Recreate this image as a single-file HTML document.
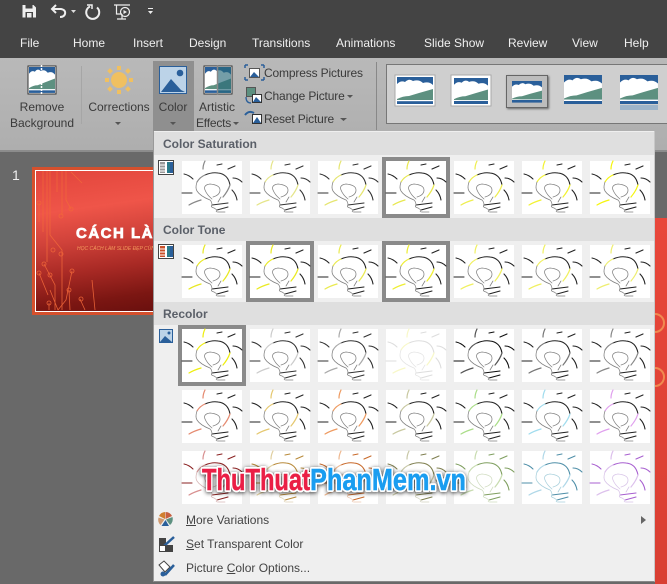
<!DOCTYPE html>
<html><head><meta charset="utf-8">
<style>
html,body{margin:0;padding:0}
body{width:667px;height:584px;position:relative;overflow:hidden;background:#696969;font-family:"Liberation Sans",sans-serif}
.a{position:absolute;white-space:nowrap}
.tab{position:absolute;top:36px;color:#f0f0f0;font-size:12px;line-height:14px}
.rb{position:absolute;color:#3a3a3a;font-size:12px;line-height:16px;text-align:center;white-space:nowrap}
.hd{position:absolute;left:154px;width:500px;height:23px;background:#dfdfdf;color:#5a5f68;font-size:12px;font-weight:bold;line-height:24px;text-indent:9px}
.mi{position:absolute;left:186px;color:#444;font-size:12px;line-height:14px;white-space:nowrap}
.sel{position:absolute;width:60px;height:53px;border:4px solid #8a8a8a}
svg{position:absolute;left:0;top:0}
.l{fill:none;stroke-linecap:round}
</style></head>
<body>
<div class="a" style="left:0;top:0;width:667px;height:58px;background:#444"></div>
<div class="a" style="left:0;top:58px;width:667px;height:92px;background:linear-gradient(#b9b9b9,#aeaeae)"></div>
<div class="a" style="left:0;top:150px;width:667px;height:2px;background:#8c8c8c"></div>
<div class="a" style="left:153px;top:61px;width:41px;height:70px;background:#8f8f8f"></div>
<div class="a" style="left:81px;top:66px;width:1px;height:58px;background:#a6a6a6"></div>
<div class="a" style="left:376px;top:62px;width:1px;height:68px;background:#888"></div>
<div class="a" style="left:386px;top:64px;width:281px;height:58px;background:#cfcfcf;border:1px solid #777;border-right:0"></div>
<div class="a" style="left:506px;top:75px;width:40px;height:31px;background:#bdbdbd;border:1px solid #666;box-shadow:1px 1px 2px #666"></div>

<span class="tab" style="left:20px">File</span>
<span class="tab" style="left:73px">Home</span>
<span class="tab" style="left:133px">Insert</span>
<span class="tab" style="left:189px">Design</span>
<span class="tab" style="left:252px">Transitions</span>
<span class="tab" style="left:336px">Animations</span>
<span class="tab" style="left:424px">Slide Show</span>
<span class="tab" style="left:508px">Review</span>
<span class="tab" style="left:572px">View</span>
<span class="tab" style="left:624px">Help</span>

<div class="rb" style="left:2px;top:99px;width:80px">Remove<br>Background</div>
<div class="rb" style="left:84px;top:99px;width:70px">Corrections</div>
<div class="rb" style="left:153px;top:99px;width:40px">Color</div>
<div class="rb" style="left:194px;top:99px;width:46px">Artistic</div>
<div class="rb" style="left:196px;top:115px;letter-spacing:-.2px">Effects</div>
<div class="rb" style="left:264px;top:65px;letter-spacing:-.15px">Compress Pictures</div>
<div class="rb" style="left:264px;top:88px;letter-spacing:-.15px">Change Picture</div>
<div class="rb" style="left:264px;top:111px;letter-spacing:-.15px">Reset Picture</div>

<!-- slide thumbnail -->
<div class="a" style="left:12px;top:167px;color:#f0f0f0;font-size:14px">1</div>
<div class="a" style="left:32px;top:167px;width:125px;height:148px;background:#d5502d"></div>
<div class="a" style="left:35px;top:170px;width:120px;height:140px;border:1px solid #fff;background:linear-gradient(172deg,#e2453c 0%,#ef5549 28%,#d0423a 48%,#a92a25 68%,#7b1612 88%,#6a100e 100%)"></div>
<div class="a" style="left:76px;top:225px;color:#fff;font:bold 15px 'Liberation Sans',sans-serif;letter-spacing:1.500px;-webkit-text-stroke:.7px #fff">CÁCH LÀM</div>
<div class="a" style="left:77px;top:246px;color:#f49a5c;font:italic 5px 'Liberation Sans',sans-serif">HỌC CÁCH LÀM SLIDE ĐẸP CÙNG THỦ THUẬT</div>
<!-- main slide right strip -->
<div class="a" style="left:655px;top:218px;width:12px;height:366px;background:linear-gradient(#e8473a,#d93f33)"></div>
<div class="a" style="left:645px;top:313px;width:16px;height:16px;border:2px solid #f08a50;border-radius:50%"></div>
<div class="a" style="left:645px;top:367px;width:16px;height:16px;border:2px solid #f08a50;border-radius:50%"></div>

<!-- menu -->
<div class="a" style="left:153px;top:131px;width:502px;height:451px;background:#efefef;border-right:1px solid #c8c8c8;border-bottom:1px solid #888;border-left:1px solid #999;box-sizing:border-box"></div>
<div class="hd" style="top:132px">Color Saturation</div>
<div class="hd" style="top:218px">Color Tone</div>
<div class="hd" style="top:302px">Recolor</div>

<div class="mi" style="top:513px"><u>M</u>ore Variations</div>
<div class="mi" style="top:537px"><u>S</u>et Transparent Color</div>
<div class="mi" style="top:561px">Picture <u>C</u>olor Options...</div>

<div class="sel" style="left:382px;top:157px"></div>
<div class="sel" style="left:246px;top:241px"></div>
<div class="sel" style="left:382px;top:241px"></div>
<div class="sel" style="left:178px;top:325px"></div>

<svg width="667" height="584" viewBox="0 0 667 584">
<defs>
<g id="b" class="l">
<rect width="60" height="53" fill="#fff" stroke="none"/>
<g filter="url(#s)">
<g stroke="var(--m)" stroke-width="1.100">
<path d="M2 13Q7 14 11 18M0 32H10M51 17Q56 17 60 21M50 29Q54 33 55 39M46 8 53 5M35 4 40 3"/>
<path d="M23 14Q30 11 36 12Q46 13 48 24"/>
<path d="M30 44 46 42M35 49 46 46"/>
</g>
<g stroke="var(--a)" stroke-width="1.200">
<path d="M23 0Q21 4 21 8M7 44Q12 41 19 39M15 21Q18 16 23 14M48 24Q46 30 41 36"/>
</g>
<g stroke="var(--i)" stroke-width=".75">
<path d="M15 21Q13 27 15 30Q18 35 28 39Q30 41 30 44M23 29Q21 24 28 23Q38 24 38 29Q38 34 31 36M23 29Q25 34 30 38M30 44Q28 46 32 47L35 49Q33 51 36 51H43M39 36 36 41"/>
</g>
</g>
</g>
<g id="pic">
<rect width="36" height="27" fill="#2a5f9a"/>
<path d="M0 7Q4 3 8 5Q12 1 16 4Q22 2 26 6Q32 4 36 8V19L0 24Z" fill="#fff"/>
<path d="M0 22Q6 19 12 19L22 16 36 12V23H0Z" fill="#5d9080"/>
<rect y="23" width="36" height="1.300" fill="#fff"/>
</g>
<filter id="s" x="-5%" y="-5%" width="110%" height="110%"><feGaussianBlur stdDeviation=".3"/></filter>
<filter id="ws" x="-5%" y="-25%" width="110%" height="150%"><feDropShadow dx="0" dy="1" stdDeviation="2" flood-color="#111" flood-opacity=".8"/></filter>
</defs>

<!-- quick access -->
<path d="M22.500 5H33.500L36 7.500V17.500H22.500Z" fill="#eee"/><rect x="25.500" y="5" width="7" height="3.500" fill="#444"/><rect x="25.500" y="12" width="7.500" height="5.500" fill="#444"/><rect x="27" y="13" width="4.500" height="4.500" fill="#eee"/>
<g fill="none" stroke="#eee">
<path d="M52 9H61Q66 10 65 14 64 17 60 17" stroke-width="2"/>
<path d="M56 5 52 9 56 13" stroke-width="2"/>
<path d="M90 6.500A6.500 6.500 0 1 0 97 7.500" stroke-width="2"/><path d="M87 5H92V9" stroke-width="1.500"/>
<path d="M114 5H130M116.500 5V14H122M122 14V19M117 19H126" stroke-width="1.200"/><circle cx="125" cy="12" r="4.500" stroke-width="1.200"/>
</g>
<path d="M123.500 10 127 12 123.500 14Z" fill="#eee"/>
<path d="M71 10H76L73.500 13Z" fill="#ddd"/><path d="M148 8H153V9H148ZM148 11H153L150.500 14Z" fill="#eee"/>

<!-- ribbon icons -->
<rect x="28" y="66" width="28" height="28" fill="#fff" stroke="#333"/>
<use href="#pic" transform="translate(29 67) scale(.722 .96)"/>
<path d="M41.500 65V95" stroke="#fff" stroke-width="1.500" stroke-dasharray="2 1"/>
<g fill="#f0c060"><circle cx="119" cy="80" r="8"/><rect x="117" y="66" width="4" height="4"/><rect x="117" y="90" width="4" height="4"/><rect x="105" y="78" width="4" height="4"/><rect x="129" y="78" width="4" height="4"/><rect x="108" y="69" width="4" height="4" transform="rotate(45 110 71)"/><rect x="126" y="69" width="4" height="4" transform="rotate(45 128 71)"/><rect x="108" y="87" width="4" height="4" transform="rotate(45 110 89)"/><rect x="126" y="87" width="4" height="4" transform="rotate(45 128 89)"/></g>
<rect x="159.500" y="66.500" width="27" height="27" fill="#bcd3e8" stroke="#2a5f9a"/><circle cx="180" cy="73" r="3.300" fill="#2a5f9a"/><path d="M161 92 171 79 181 90 185 92Z" fill="#2a5f9a"/>
<rect x="204" y="66" width="28" height="28" fill="#fff" stroke="#333"/>
<use href="#pic" transform="translate(205 67) scale(.722 .96)"/>
<path d="M218 67H231V93H218Z" fill="#2a6a7a" opacity=".65"/>
<path d="M217.500 65V95" stroke="#888" stroke-width="1.500"/>
<rect x="249.500" y="68.500" width="10" height="9" fill="#fff" stroke="#555"/><path d="M250 77 254 72 259 77Z" fill="#2a5f9a"/>
<path d="M245 65H248M245 65V68M264 65H261M264 65V68M245 80H248M245 80V77M264 80H261M264 80V77" stroke="#2a5f9a" fill="none" stroke-width="1.500"/>
<rect x="246.500" y="87.500" width="9" height="9" fill="#5d9080" stroke="#555"/><rect x="252.500" y="94.500" width="9" height="8" fill="#fff" stroke="#333"/><path d="M253 102 256 97 261 102Z" fill="#2a5f9a"/><path d="M246 97Q246 103 251 103" stroke="#2a5f9a" fill="none" stroke-width="1.300"/>
<path d="M245 115Q249 110 254 113" stroke="#2a5f9a" fill="none" stroke-width="2"/><rect x="252.500" y="114.500" width="9" height="9" fill="#fff" stroke="#333"/><path d="M253 123 257 117 261 123Z" fill="#2a5f9a"/>
<g fill="#555"><path d="M115 122H121L118 125ZM170 122H176L173 125ZM233 122H239L236 125ZM347 95H353L350 98ZM340 118H347L343.500 121Z"/></g>

<!-- picture styles -->
<rect x="395" y="75" width="40" height="31" fill="#fff" stroke="#aaa"/><use href="#pic" transform="translate(397 77)"/><rect x="397" y="101.300" width="36" height="2.700" fill="#2a5f9a"/>
<rect x="451" y="75" width="40" height="31" fill="#fff" stroke="#aaa"/><use href="#pic" transform="translate(454 78) scale(.944 .96)"/><rect x="454" y="101" width="34" height="3" fill="#2a5f9a"/>
<use href="#pic" transform="translate(512 81) scale(.833 .8)"/><rect x="512" y="100" width="30" height="2" fill="#2a5f9a"/>
<use href="#pic" transform="translate(564 75) scale(1.055 1.07)"/><rect x="564" y="101" width="38" height="3" fill="#2a5f9a"/>
<use href="#pic" transform="translate(620 75) scale(1.055 1.07)"/><rect x="620" y="101" width="38" height="3" fill="#2a5f9a"/><rect x="620" y="105" width="38" height="5" fill="#9db4c9"/>

<!-- circuit lines in thumbnail -->
<g fill="none" stroke="#f2683a" stroke-width=".8" opacity=".9">
<path d="M43 171V232M47 171V262M50 171V235L62 250V310M57 171V192M62 171V215M66 171V200L71 209M71 172 82 183M39 203V222M44 264 55 285V310M50 290 58 310M72 271 66 300 58 310M85 310 80 299M95 310 92 280M70 310 69 290M49 303V310M39 273 48 295"/>
<circle cx="39" cy="203" r="2"/><circle cx="71" cy="209" r="2"/><circle cx="61" cy="216" r="2"/><circle cx="44" cy="264" r="2"/><circle cx="53" cy="250" r="2"/><circle cx="61" cy="254" r="2"/><circle cx="39" cy="273" r="2"/><circle cx="50" cy="275" r="2"/><circle cx="72" cy="271" r="2"/><circle cx="69" cy="290" r="2"/><circle cx="49" cy="303" r="2"/><circle cx="81" cy="299" r="2"/>
</g>

<!-- side icons -->
<g><rect x="158.500" y="160.500" width="15" height="14" fill="#fff" stroke="#444"/><path d="M160 162H165V173H160Z" fill="#999"/><path d="M160 165H165M160 168H165M160 171H165" stroke="#fff"/><path d="M167 162H172.500V173H167Z" fill="#2a7a8a"/><path d="M170 162H173V173H170Z" fill="#2a5f9a"/></g>
<g><rect x="158.500" y="244.500" width="15" height="14" fill="#fff" stroke="#444"/><path d="M160 246H165V257H160Z" fill="#c8502a"/><path d="M160 249H165M160 252H165M160 255H165" stroke="#fff"/><path d="M167 246H172.500V257H167Z" fill="#2a7a8a"/><path d="M170 246H173V257H170Z" fill="#2a5f9a"/></g>
<g><rect x="159.500" y="329.500" width="13" height="13" fill="#bcd3e8" stroke="#2a5f9a"/><circle cx="169" cy="333" r="1.500" fill="#2a5f9a"/><path d="M160 342 165 336 172 342Z" fill="#2a5f9a"/></g>

<!-- thumbnails -->
<g style="--i:#808080">
<use href="#b" x="182" y="161" style="--m:#333;--a:#888"/>
<use href="#b" x="250" y="161" style="--m:#333;--a:#e5e58a"/>
<use href="#b" x="318" y="161" style="--m:#333;--a:#e5e570"/>
<use href="#b" x="386" y="161" style="--m:#222;--a:#e8e850"/>
<use href="#b" x="454" y="161" style="--m:#222;--a:#eeee50"/>
<use href="#b" x="522" y="161" style="--m:#222;--a:#f2f230"/>
<use href="#b" x="590" y="161" style="--m:#222;--a:#f5f510"/>

<use href="#b" x="182" y="245" style="--m:#222;--a:#e8e820"/>
<use href="#b" x="250" y="245" style="--m:#222;--a:#eaea20"/>
<use href="#b" x="318" y="245" style="--m:#222;--a:#eaea50"/>
<use href="#b" x="386" y="245" style="--m:#222;--a:#eeee30"/>
<use href="#b" x="454" y="245" style="--m:#222;--a:#f0f060"/>
<use href="#b" x="522" y="245" style="--m:#222;--a:#f0f060"/>
<use href="#b" x="590" y="245" style="--m:#222;--a:#eeee70"/>

<use href="#b" x="182" y="329" style="--m:#222;--a:#eeee10"/>
<use href="#b" x="250" y="329" style="--m:#333;--a:#ccc"/>
<use href="#b" x="318" y="329" style="--m:#333;--a:#aaa"/>
<use href="#b" x="386" y="329" style="--m:#ddd;--a:#f8f8c8;--i:#e4e4e4"/>
<use href="#b" x="454" y="329" style="--m:#111;--a:#555"/>
<use href="#b" x="522" y="329" style="--m:#222;--a:#777"/>
<use href="#b" x="590" y="329" style="--m:#222;--a:#888"/>

<use href="#b" x="182" y="390" style="--m:#222;--a:#e58a70"/>
<use href="#b" x="250" y="390" style="--m:#222;--a:#e5c870"/>
<use href="#b" x="318" y="390" style="--m:#222;--a:#ee9a60"/>
<use href="#b" x="386" y="390" style="--m:#222;--a:#c8c8a0"/>
<use href="#b" x="454" y="390" style="--m:#222;--a:#aadd88"/>
<use href="#b" x="522" y="390" style="--m:#222;--a:#a0dcee"/>
<use href="#b" x="590" y="390" style="--m:#222;--a:#e0a0ee"/>

<use href="#b" x="182" y="451" style="--m:#8a2020;--a:#d89090;--i:#d8b8b8"/>
<use href="#b" x="250" y="451" style="--m:#b88a3a;--a:#e0cfa0;--i:#e0d4b8"/>
<use href="#b" x="318" y="451" style="--m:#c8692a;--a:#eeb890;--i:#ecc8b0"/>
<use href="#b" x="386" y="451" style="--m:#7f7f50;--a:#c8c8a8;--i:#d4d4c0"/>
<use href="#b" x="454" y="451" style="--m:#7f9f5f;--a:#c8dcb0;--i:#d0dcc0"/>
<use href="#b" x="522" y="451" style="--m:#4f8fa8;--a:#b0d8e8;--i:#a8d0dc"/>
<use href="#b" x="590" y="451" style="--m:#a860d0;--a:#dcc0ec;--i:#d8c4e8"/>
</g>

<!-- menu icons -->
<path d="M165 519 159 516A7.500 7.500 0 0 1 165 512Z" fill="#d08030"/><path d="M165.500 519V512A7.500 7.500 0 0 1 172 516Z" fill="#c86040"/><path d="M166 519.500 172.500 517A7.500 7.500 0 0 1 170 525Z" fill="#5d9080"/><path d="M165.500 520 169 526H161.500Z" fill="#2a5f9a"/><path d="M164.500 519.500 160.500 525A7.500 7.500 0 0 1 158.500 517.500Z" fill="#d09a70"/>
<rect x="159" y="538" width="7" height="7" fill="#444"/><rect x="166" y="545" width="7" height="7" fill="#444"/><path d="M164 546 174 537" stroke="#2a5f9a" stroke-width="2.500"/><rect x="159.500" y="545.500" width="6" height="6" fill="#fff" stroke="#444"/>
<path d="M159 565 164 561 170 567 165 572Z" fill="#fff" stroke="#444"/><path d="M165 575 174 565" stroke="#2a5f9a" stroke-width="2.500"/><circle cx="163" cy="574" r="2.500" fill="#2a5f9a"/>
<path d="M641 516V524L646 520Z" fill="#666"/>

<!-- watermark -->
<g font-family="'Liberation Sans',sans-serif" font-weight="bold" font-size="31">
<g filter="url(#ws)" stroke="#fff" stroke-width="4" stroke-linejoin="round" fill="#fff">
<text x="202" y="490" textLength="108" lengthAdjust="spacingAndGlyphs">ThuThuat</text>
<text x="310" y="490" textLength="156" lengthAdjust="spacingAndGlyphs">PhanMem.vn</text>
</g>
<text x="202" y="490" textLength="108" lengthAdjust="spacingAndGlyphs" fill="#ea1f45" stroke="#ea1f45" stroke-width=".5">ThuThuat</text>
<text x="310" y="490" textLength="156" lengthAdjust="spacingAndGlyphs" fill="#1a9df0" stroke="#1a9df0" stroke-width=".5">PhanMem.vn</text>
</g>
</svg>
</body></html>
